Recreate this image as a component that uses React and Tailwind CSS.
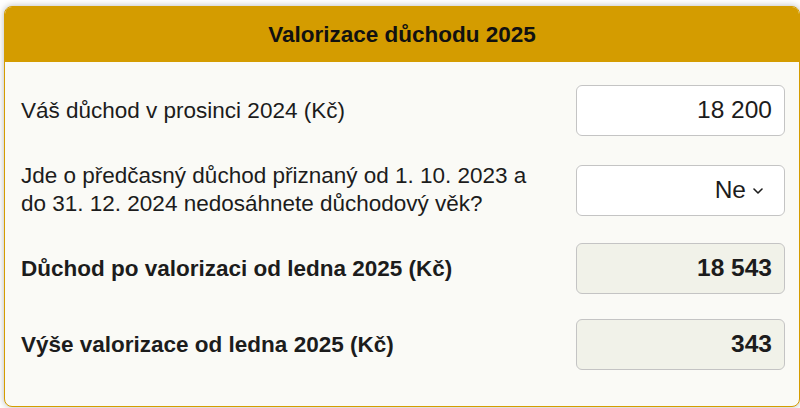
import React from 'react';

const ChevronDown = () => (
  <svg className="w-[10px] h-[6px] ml-[7px] mt-[2px]" viewBox="0 0 10 6" fill="none" stroke="currentColor">
    <path strokeWidth={1.6} strokeLinecap="round" strokeLinejoin="round" d="M1 1l4 4 4-4" />
  </svg>
);

const Row = ({ label, bold, children, className = '' }) => (
  <div className={`flex items-center justify-between ${className}`}>
    <div className={`w-[525px] text-[22.5px] leading-[28px] text-[#1c1c1c] ${bold ? 'font-bold' : ''}`}>
      {label}
    </div>
    {children}
  </div>
);

export default function App() {
  return (
    <div className="w-[800px] h-[408px] bg-white pt-[6px] pl-[4px]" style={{ fontFamily: '"Liberation Sans", Arial, sans-serif' }}>
      <div className="w-[796px] h-[401px] rounded-[8px] border border-[#d49c00] bg-[#fafaf6] overflow-hidden shadow-[0_0_7px_rgba(0,0,0,0.28)]">
        <div className="h-[55px] bg-[#d49c00] flex items-center justify-center">
          <h1 className="text-[22.5px] font-bold text-[#111]">Valorizace důchodu 2025</h1>
        </div>

        <div className="pl-[16px] pr-[14px] pt-[23px]">
          <Row label="Váš důchod v prosinci 2024 (Kč)">
            <div className="w-[209px] h-[51px] rounded-[6px] border border-[#c4c4c4] bg-white flex items-center justify-end pr-[12px] text-[24.5px] text-[#1c1c1c]">
              18 200
            </div>
          </Row>

          <Row className="mt-[26px]" label="Jde o předčasný důchod přiznaný od 1. 10. 2023 a do 31. 12. 2024 nedosáhnete důchodový věk?">
            <div className="w-[209px] h-[51px] rounded-[6px] border border-[#c4c4c4] bg-white flex items-center justify-end pr-[21px] text-[24.5px] text-[#1c1c1c]">
              Ne
              <ChevronDown />
            </div>
          </Row>

          <Row className="mt-[25px]" bold label="Důchod po valorizaci od ledna 2025 (Kč)">
            <div className="w-[209px] h-[51px] rounded-[6px] border border-[#c4c4c4] bg-[#f1f2e9] flex items-center justify-end pr-[12px] text-[24.5px] font-bold text-[#1c1c1c]">
              18 543
            </div>
          </Row>

          <Row className="mt-[25px]" bold label="Výše valorizace od ledna 2025 (Kč)">
            <div className="w-[209px] h-[51px] rounded-[6px] border border-[#c4c4c4] bg-[#f1f2e9] flex items-center justify-end pr-[12px] text-[24.5px] font-bold text-[#1c1c1c]">
              343
            </div>
          </Row>
        </div>
      </div>
    </div>
  );
}
